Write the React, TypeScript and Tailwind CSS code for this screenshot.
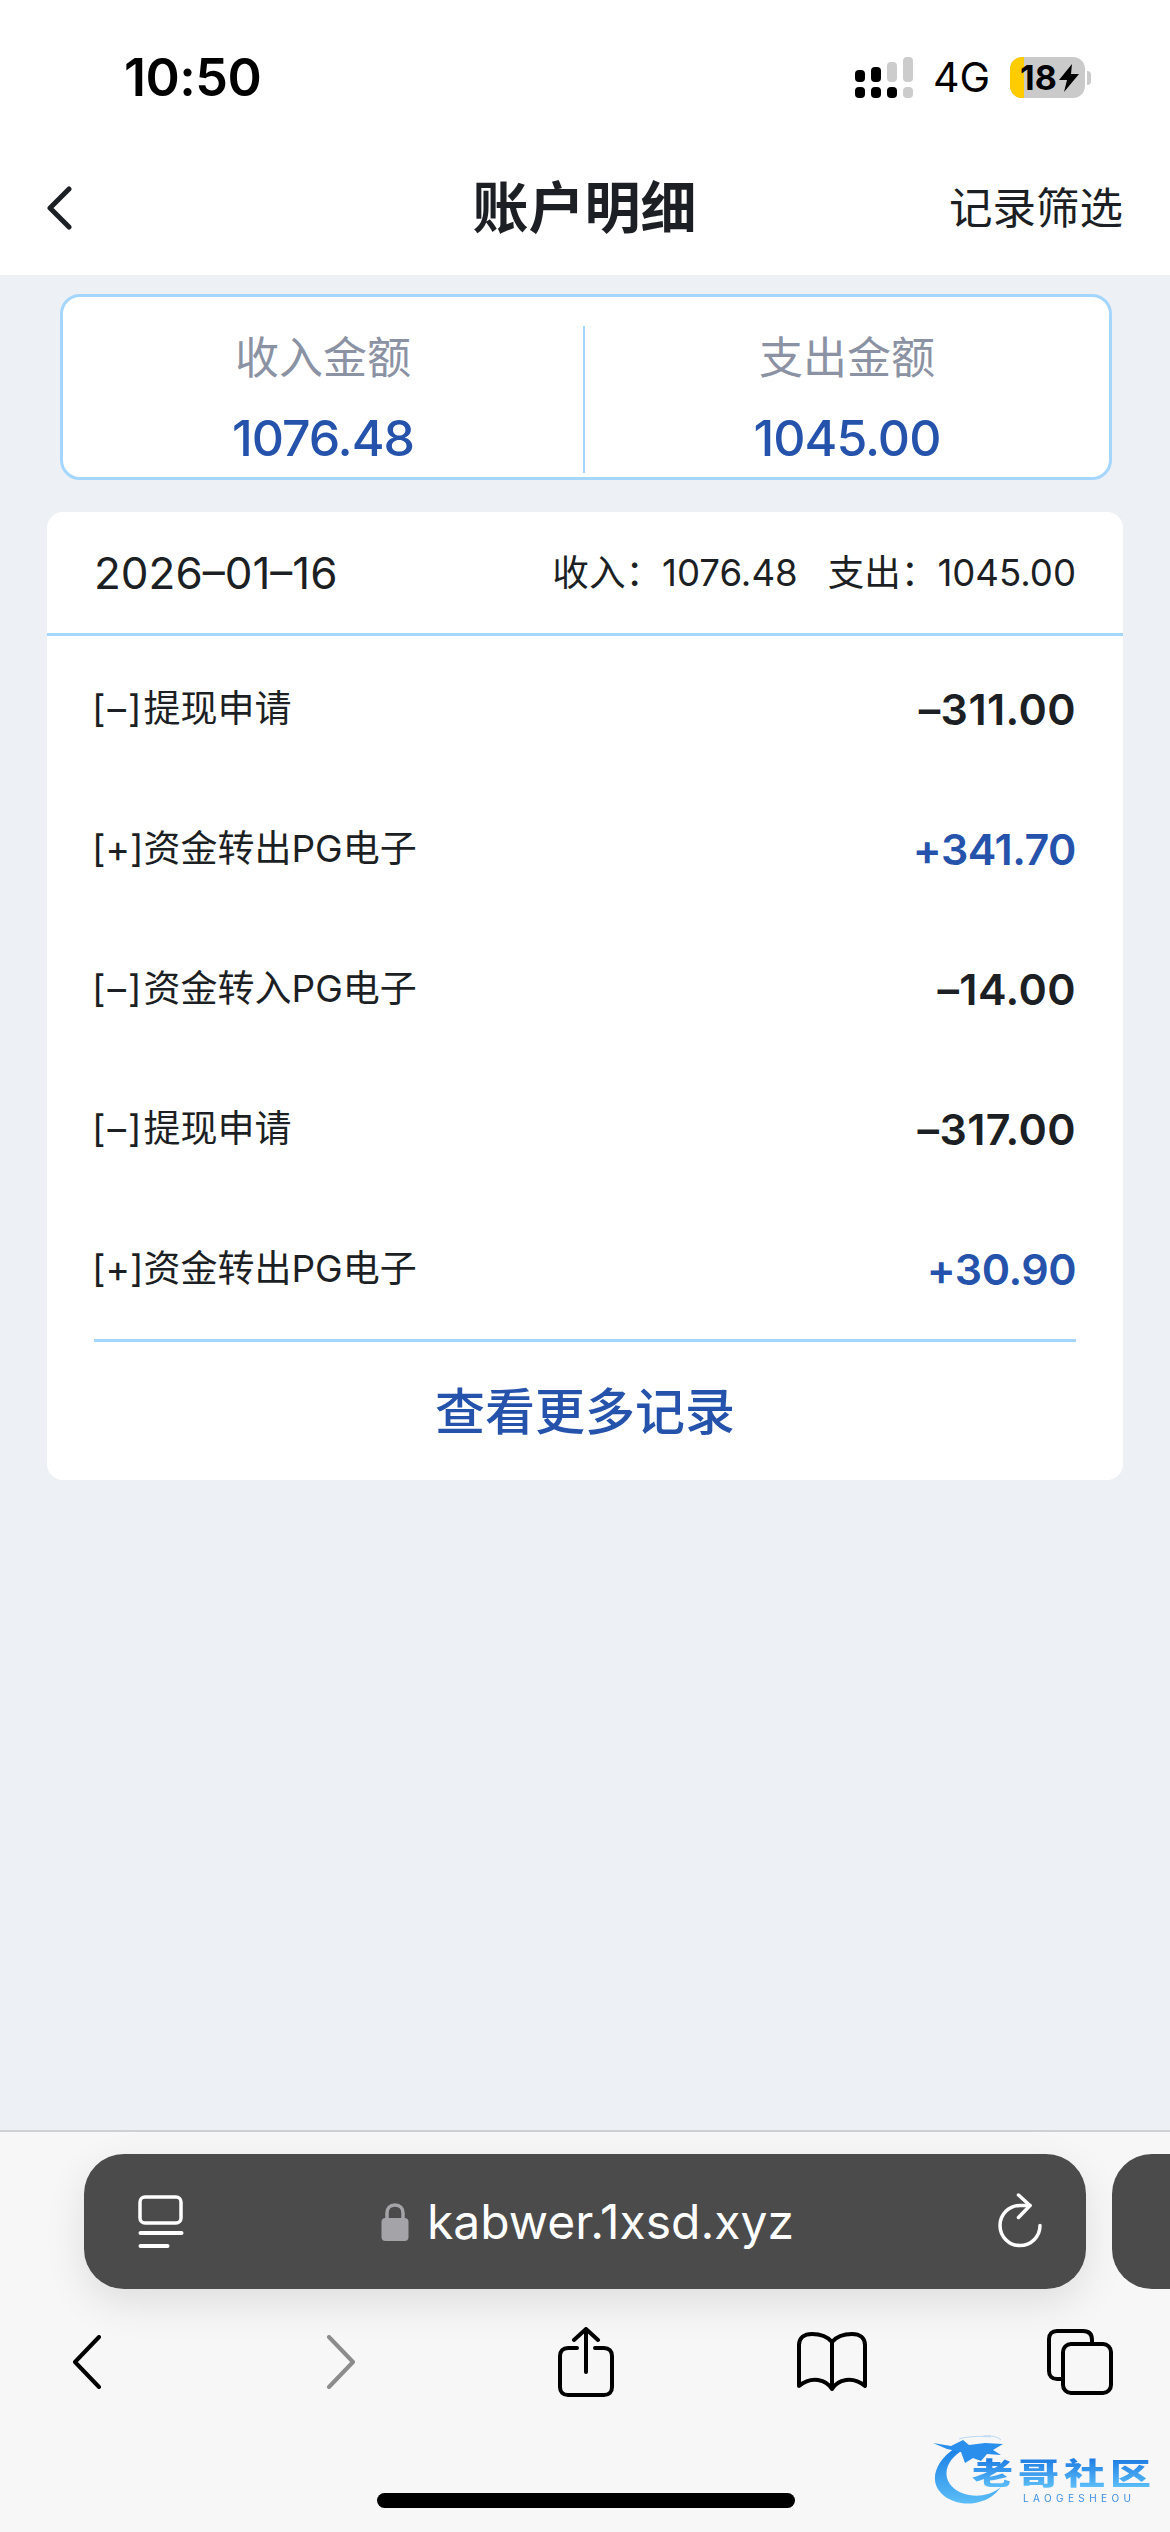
const ROWS = [
  { tag: '[–]', label: '提现申请', amount: '–311.00', income: false },
  { tag: '[+]', label: '资金转出PG电子', amount: '+341.70', income: true },
  { tag: '[–]', label: '资金转入PG电子', amount: '–14.00', income: false },
  { tag: '[–]', label: '提现申请', amount: '–317.00', income: false },
  { tag: '[+]', label: '资金转出PG电子', amount: '+30.90', income: true },
]

function SignalIcon() {
  return (
    <svg width="58" height="41" viewBox="0 0 58 41">
      <rect x="0" y="13" width="10" height="12" rx="4" fill="#000" />
      <rect x="16" y="10" width="10" height="15" rx="4" fill="#000" />
      <rect x="32" y="5" width="10" height="20" rx="4" fill="#cccccc" />
      <rect x="48" y="0" width="10" height="25" rx="4" fill="#cccccc" />
      <rect x="0" y="30" width="10" height="11" rx="4" fill="#000" />
      <rect x="16" y="30" width="10" height="11" rx="4" fill="#000" />
      <rect x="32" y="30" width="10" height="11" rx="4" fill="#000" />
      <rect x="48" y="30" width="10" height="11" rx="4" fill="#cccccc" />
    </svg>
  )
}

function Battery() {
  return (
    <div className="relative flex items-center">
      <div className="relative flex h-[41px] w-[75px] items-center overflow-hidden rounded-[12px] bg-[#cacaca]">
        <div className="h-full w-[14px] bg-[#ffcc00]" />
        <span className="absolute left-[10px] text-[34px] leading-[41px] font-bold text-black">18</span>
        <svg className="absolute left-[49px] top-[7px]" width="20" height="28" viewBox="0 0 20 28">
          <path d="M13 0 L0 16 H8 L5 28 L20 10 H12 Z" fill="#000" />
        </svg>
      </div>
      <div className="ml-[2px] h-[14px] w-[4px] rounded-r-full bg-[#cacaca]" />
    </div>
  )
}

function Watermark() {
  return (
    <div className="absolute left-[933px] top-[303px] h-[70px] w-[222px] blur-[0.6px]">
      <svg className="absolute left-0 top-0" width="100" height="70" viewBox="0 0 100 70">
        <defs>
          <linearGradient id="wm" x1="0" y1="0" x2="0" y2="1">
            <stop offset="0" stopColor="#1a7fe6" />
            <stop offset="1" stopColor="#5bbdf6" />
          </linearGradient>
        </defs>
        <path d="M22 13 C6 24 -1 38 3 50 C8 64 28 72 46 67 C55 65 62 60 68 52 C58 60 46 62 36 60 C20 57 11 46 14 34 C16 25 24 18 32 14 Z" fill="url(#wm)" />
        <path d="M0 8 L18 11 L30 5 L36 10 L52 8 L70 9 L60 15 L68 20 L54 19 L48 26 L40 23 L32 28 L28 17 L14 14 Z" fill="#2a8eec" />
        <path d="M26 4 C36 1 48 1 58 2 M50 1 C58 0 65 2 68 5" stroke="#b9d8f3" strokeWidth="1" fill="none" />
      </svg>
      <span className="absolute left-[39px] top-[22px] origin-top scale-y-[0.72] whitespace-nowrap bg-gradient-to-b from-[#1b78e2] to-[#62c4fa] bg-clip-text text-[41px] leading-[46px] font-black tracking-[5px] text-transparent">
        老哥社区
      </span>
      <span className="absolute left-[90px] top-[57px] whitespace-nowrap text-[10px] leading-[12px] tracking-[4.4px] text-[#3d8fe0]">
        LAOGESHEOU
      </span>
    </div>
  )
}

export default function App() {
  return (
    <div className="flex h-[2532px] w-[1170px] flex-col overflow-hidden bg-[#edf1f5] font-[Inter,'Noto_Sans_CJK_SC',sans-serif] text-[#1c1f23]">
      <header className="h-[275px] shrink-0 bg-white">
        <div className="flex h-[155px] items-start pl-[124px] pr-[79px] pt-[57px]">
          <span className="text-[52px] leading-[41px] font-semibold tracking-[-0.5px] text-black">10:50</span>
          <div className="ml-auto flex items-center">
            <SignalIcon />
            <span className="ml-[20px] mr-[20px] text-[41px] leading-[41px] text-black">4G</span>
            <Battery />
          </div>
        </div>
        <div className="grid h-[106px] grid-cols-[1fr_auto_1fr] items-center pl-[46px] pr-[47px]">
          <svg width="26" height="44" viewBox="0 0 26 44" fill="none">
            <path d="M23 3 L4 22 L23 41" stroke="#1c1f23" strokeWidth="5" strokeLinecap="round" strokeLinejoin="round" />
          </svg>
          <h1 className="text-[56px] leading-[60px] font-bold">账户明细</h1>
          <span className="justify-self-end text-[43.5px] leading-[50px]">记录筛选</span>
        </div>
      </header>

      <section className="ml-[60px] mr-[58px] mt-[19px] flex h-[186px] shrink-0 items-start rounded-[20px] border-[3px] border-[#a5d6ff] bg-white">
        <div className="flex w-[520px] flex-col items-center gap-[26px] pt-[36px]">
          <span className="text-[44px] leading-[50px] text-[#8b92a3]">收入金额</span>
          <span className="text-[50px] leading-[58px] font-medium tracking-[-1px] text-[#2553ab]">1076.48</span>
        </div>
        <div className="mt-[29px] h-[147px] w-[2px] bg-[#a5d6ff]" />
        <div className="flex flex-1 flex-col items-center gap-[26px] pt-[36px]">
          <span className="text-[44px] leading-[50px] text-[#8b92a3]">支出金额</span>
          <span className="text-[50px] leading-[58px] font-medium tracking-[-1px] text-[#2553ab]">1045.00</span>
        </div>
      </section>

      <section className="mx-[47px] mt-[32px] shrink-0 rounded-[16px] bg-white">
        <div className="flex h-[124px] items-center justify-between border-b-[3px] border-[#a5d6ff] px-[47px]">
          <span className="text-[44px] leading-[50px]">2026–01–16</span>
          <div className="flex gap-[30px] text-[36.6px] leading-[44px]">
            <span>收入：1076.48</span>
            <span>支出：1045.00</span>
          </div>
        </div>
        <div className="px-[47px] pt-[3px]">
          {ROWS.map((row, i) => (
            <div key={i} className="flex h-[140px] items-center justify-between">
              <span className="-ml-[2px] text-[37px] leading-[44px]">
                <span className={row.income ? '' : 'tracking-[2px]'}>{row.tag}</span>
                {row.label}
              </span>
              <span className={`text-[43px] leading-[52px] font-semibold ${row.income ? 'tracking-[-0.5px] text-[#2553ab]' : 'tracking-[0.4px]'}`}>{row.amount}</span>
            </div>
          ))}
        </div>
        <div className="mx-[47px] flex h-[141px] items-center justify-center border-t-[3px] border-[#a5d6ff] pt-[2px]">
          <span className="text-[50px] leading-[60px] font-medium text-[#2553ab]">查看更多记录</span>
        </div>
      </section>

      <div className="flex-1" />

      <footer className="relative h-[402px] shrink-0 overflow-hidden border-t-2 border-[#cfcfd6] bg-[#f7f7f7]">
        <div className="ml-[84px] mt-[22px] flex gap-[26px]">
          <div className="flex h-[135px] w-[1002px] shrink-0 items-center rounded-[40px] bg-[#4b4b4b] shadow-[0_14px_40px_rgba(0,0,0,0.10)]">
            <svg className="ml-[54px]" width="46" height="54" viewBox="0 0 46 54" fill="none">
              <rect x="2" y="2" width="41" height="26" rx="5" stroke="#fff" strokeWidth="3.5" />
              <rect x="0.5" y="36" width="45" height="4" rx="2" fill="#fff" />
              <rect x="0.5" y="49" width="31" height="4" rx="2" fill="#fff" />
            </svg>
            <svg className="ml-[197px]" width="28" height="38" viewBox="0 0 28 38" fill="none">
              <path d="M6 17 V10 C6 5 9 2 14 2 C19 2 22 5 22 10 V17" stroke="#a3a3a8" strokeWidth="3.5" />
              <rect x="0.5" y="15" width="27" height="23" rx="4" fill="#a3a3a8" />
            </svg>
            <span className="ml-[18px] text-[48px] leading-[56px] text-white">kabwer.1xsd.xyz</span>
            <svg className="ml-auto mr-[42px]" width="48" height="58" viewBox="0 0 48 58" fill="none">
              <path d="M34 12.5 H24 A20 20 0 1 0 44 32.5" stroke="#fff" strokeWidth="3.5" strokeLinecap="round" />
              <path d="M22.5 2 L34 12.5 L22.5 24.5" stroke="#fff" strokeWidth="3.5" strokeLinecap="round" strokeLinejoin="round" />
            </svg>
          </div>
          <div className="h-[135px] w-[200px] shrink-0 rounded-[40px] bg-[#4b4b4b]" />
        </div>

        <div className="mt-[38px] flex h-[70px] items-center">
          <svg className="ml-[72px]" width="30" height="54" viewBox="0 0 30 54" fill="none">
            <path d="M27 2 L3 27 L27 52" stroke="#000" strokeWidth="4" strokeLinecap="round" strokeLinejoin="round" />
          </svg>
          <svg className="ml-[224px]" width="30" height="54" viewBox="0 0 30 54" fill="none">
            <path d="M3 2 L27 27 L3 52" stroke="#8c8c8c" strokeWidth="4" strokeLinecap="round" strokeLinejoin="round" />
          </svg>
          <svg className="ml-[202px]" width="56" height="70" viewBox="0 0 56 70" fill="none">
            <path d="M19 21 H10 C5 21 2 24 2 29 V60 C2 65 5 68 10 68 H46 C51 68 54 65 54 60 V29 C54 24 51 21 46 21 H37" stroke="#000" strokeWidth="4" strokeLinecap="round" />
            <path d="M28 3 V45" stroke="#000" strokeWidth="4" strokeLinecap="round" />
            <path d="M16 13 L28 2 L40 13" stroke="#000" strokeWidth="4" strokeLinecap="round" strokeLinejoin="round" />
          </svg>
          <svg className="ml-[183px]" width="70" height="60" viewBox="0 0 70 60" fill="none">
            <path d="M35 10 C30 4 24 2 15 2 C7 2 2 6 2 13 V54 C8 49 14 47 21 48 C27 49 32 52 35 57 C38 52 43 49 49 48 C56 47 62 49 68 54 V13 C68 6 63 2 55 2 C46 2 40 4 35 10 Z M35 10 V57" stroke="#000" strokeWidth="4" strokeLinejoin="round" />
          </svg>
          <svg className="ml-[180px]" width="66" height="66" viewBox="0 0 66 66" fill="none">
            <path d="M15 50 H10 C5 50 2 47 2 42 V10 C2 5 5 2 10 2 H36 C42 2 45 5 45 11 V15" stroke="#000" strokeWidth="4" />
            <rect x="16" y="15" width="48" height="49" rx="8" stroke="#000" strokeWidth="4" />
          </svg>
        </div>

        <div className="ml-[377px] mt-[96px] h-[15px] w-[418px] rounded-full bg-black" />
        <Watermark />
      </footer>
    </div>
  )
}
